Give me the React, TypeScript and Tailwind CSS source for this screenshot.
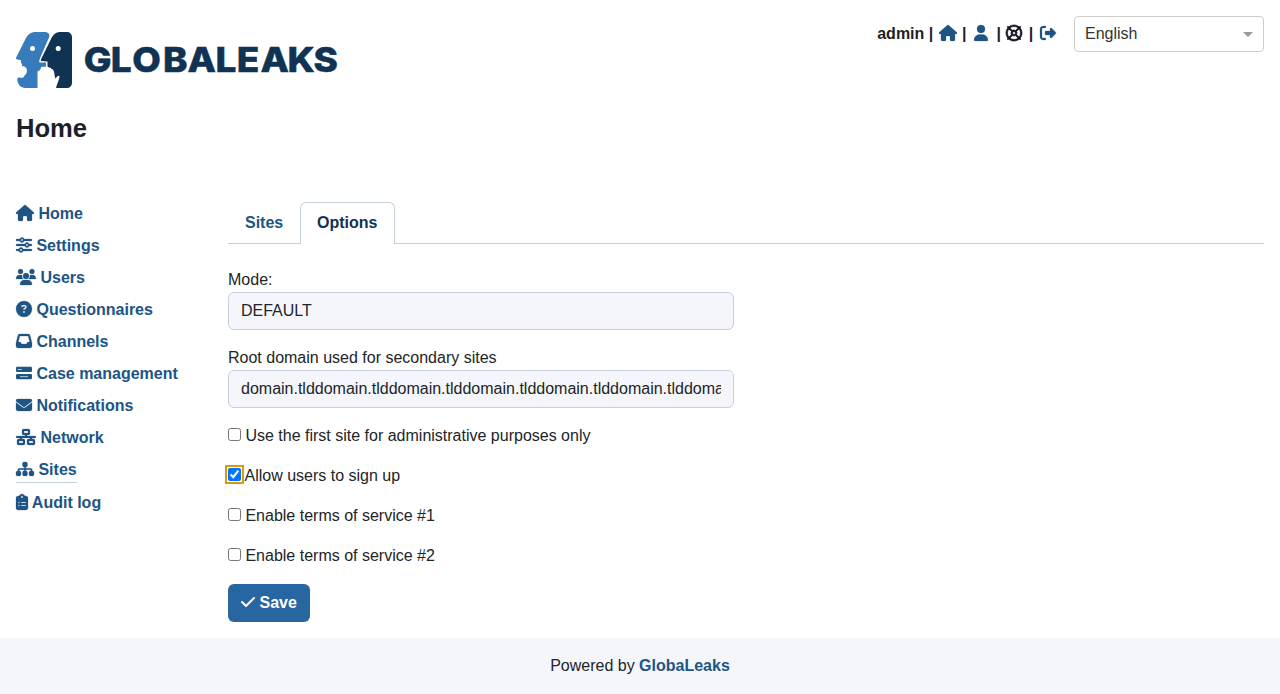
import { useState, type ReactNode } from "react";
import {
  FaCheck,
  FaCircleQuestion,
  FaClipboardList,
  FaEnvelope,
  FaHouse,
  FaInbox,
  FaNetworkWired,
  FaRegLifeRing,
  FaRightFromBracket,
  FaSitemap,
  FaSliders,
  FaUser,
  FaUsers,
} from "react-icons/fa6";

type NavItem = {
  label: string;
  icon: (props: { className?: string }) => ReactNode;
  width: string;
  active?: boolean;
};

function BarsIcon({ className }: { className?: string }) {
  return (
    <svg viewBox="0 0 16 16" fill="currentColor" className={`${className} stroke-0`}>
      <rect x="0" y="1.800" width="16" height="5.200" rx="1.300" />
      <rect x="0" y="9" width="16" height="5.200" rx="1.300" />
      <rect x="1.600" y="4" width="4.200" height="0.900" fill="#c5d3e0" />
      <rect x="4" y="11.200" width="8" height="0.900" fill="#c5d3e0" />
    </svg>
  );
}

const navItems: NavItem[] = [
  { label: "Home", icon: FaHouse, width: "w-[18px]" },
  { label: "Settings", icon: FaSliders, width: "w-[16px]" },
  { label: "Users", icon: FaUsers, width: "w-[20px]" },
  { label: "Questionnaires", icon: FaCircleQuestion, width: "w-[16px]" },
  { label: "Channels", icon: FaInbox, width: "w-[16px]" },
  { label: "Case management", icon: BarsIcon, width: "w-[16px]" },
  { label: "Notifications", icon: FaEnvelope, width: "w-[16px]" },
  { label: "Network", icon: FaNetworkWired, width: "w-[20px]" },
  { label: "Sites", icon: FaSitemap, width: "w-[18px]", active: true },
  { label: "Audit log", icon: FaClipboardList, width: "mr-[-0.6px] w-[12px]" },
];

function Logo() {
  return (
    <svg width="320" height="56" viewBox="0 0 320 56" className="block overflow-visible">
      <path
        fill="#377bbc"
        d="M9 8C11.5 2.5 14.500 0 20 0H28.500C32.500 0 34.300 2.600 33 5.500L24.300 25.500C23.400 27.800 23 29.500 23.500 30.500H30V34.700H25.500L24 38L21.500 39.500V56H9.500C4.500 56 1.300 52 1.300 47L2.500 45.200C6 46.500 8 45.800 8.500 43.500C10.700 42 11.300 39.500 10.700 36.700C9.500 34.500 8 34.200 6 34L6.200 32L5 31V28.300L0.500 27.300C-0.200 26.800 0 26 0.300 25.300Z"
      />
      <path
        fill="#103253"
        d="M34.500 8C37 2.500 39.500 0 45 0H50.500C54 0 56 2 56 5.500V50.500C56 54 54 56 50.500 56H40C41 52 42.800 48.500 43.500 45C43.500 43.500 42.500 43.300 41.500 44.300L39.200 46.500C38.300 43 38.800 40.500 37 37.500L35.500 37L34.500 35.700L33 35.500L31.500 34.500V29.500L25.300 29C24.700 28.500 24.900 27.500 25.300 26.700Z"
      />
      <circle cx="16.500" cy="16.400" r="2.500" fill="#fff" />
      <circle cx="42.200" cy="16.400" r="2.500" fill="#fff" />
      <text
        transform="scale(1.080 1)"
        x="62.700 87.800 107.600 136.100 158.800 184.800 204.300 226.300 251.500 275.400"
        y="40"
        fill="#103253"
        stroke="#103253"
        strokeWidth="0.500"
        className="font-['Inter',sans-serif] text-[34.2px] font-extrabold"
      >
        GLOBALEAKS
      </text>
    </svg>
  );
}

function CheckRow({ children, checked = false }: { children: ReactNode; checked?: boolean }) {
  const [on, setOn] = useState(checked);
  return (
    <label className="flex h-6 items-start">
      <input
        type="checkbox"
        checked={on}
        onChange={() => setOn(!on)}
        className={
          checked
            ? "mt-[4px] mr-[3.5px] size-[13px] rounded-[2.5px] outline-2 outline-offset-1 outline-[#e59700]"
            : "mt-[4px] mr-[4.45px] size-[13px]"
        }
      />
      {children}
    </label>
  );
}

function Field({ label, value }: { label: string; value: string }) {
  return (
    <label className="flex flex-col">
      {label}
      <input
        type="text"
        defaultValue={value}
        className="h-[38px] w-[506px] rounded-md border border-[#c6cfe0] bg-[#f5f6fb] px-3"
      />
    </label>
  );
}

export default function App() {
  return (
    <div className="flex h-[694px] flex-col bg-white font-['Liberation_Sans',Arial,sans-serif] text-base text-[#212529]">
      <header className="flex h-[88px] items-start justify-between px-4 pt-4">
        <div className="pt-4">
          <Logo />
        </div>
        <div className="flex items-start">
          <div className="flex h-9 items-center gap-[5.4px] font-bold text-[#1d1f2a]">
            <span className="mr-[-0.9px]">admin</span>
            <span>|</span>
            <FaHouse className="-mt-[2px] h-4 w-[18px] overflow-visible stroke-[8px] text-[#205485]" />
            <span>|</span>
            <FaUser className="-mt-[2px] ml-[2px] mr-[3px] h-4 w-[14px] overflow-visible stroke-[8px] text-[#205485]" />
            <span>|</span>
            <FaRegLifeRing className="-mt-[2px] ml-[0.2px] mr-[1px] h-4 w-4 overflow-visible stroke-[22px] text-[#111320]" />
            <span>|</span>
            <FaRightFromBracket className="-mt-[2px] ml-[1.300px] h-4 w-4 overflow-visible stroke-[8px] text-[#205485]" />
          </div>
          <div className="ml-[18px] flex h-9 w-[190px] items-center justify-between rounded border border-[#ccc] pr-[10px] pl-[10px] text-[#333]">
            English
            <span className="mt-[1px] border-x-[5px] border-t-[5px] border-x-transparent border-t-[#999]" />
          </div>
        </div>
      </header>

      <h1 className="mt-6 px-4 text-[25.600px] leading-8 font-bold text-[#1d1f2a]">Home</h1>

      <div className="flex flex-1 px-4 pt-[58px]">
        <nav className="flex w-[212px] flex-col items-start font-bold text-[#205485]">
          {navItems.map(({ label, icon: Icon, width, active }) => (
            <a
              key={label}
              className={
                active
                  ? "mb-2 flex h-[25px] items-start gap-[4.450px] border-b border-[#c6cfe0]"
                  : "mb-2 flex h-6 items-start gap-[4.450px]"
              }
            >
              <Icon className={`mt-[3px] h-4 overflow-visible stroke-[8px] ${width}`} />
              <span>{label}</span>
            </a>
          ))}
        </nav>

        <main className="flex-1">
          <div className="flex h-[42px] border-b border-[#c6cfe0] font-bold">
            <a className="w-[72px] pt-[9px] pl-[17px] text-[#205485]">Sites</a>
            <a className="h-[42px] w-[95px] rounded-t-md border border-b-0 border-[#c6cfe0] bg-white pt-2 pl-4 text-[#103253]">
              Options
            </a>
          </div>
          <div className="flex flex-col gap-4 pt-6">
            <Field label="Mode:" value="DEFAULT" />
            <Field
              label="Root domain used for secondary sites"
              value="domain.tlddomain.tlddomain.tlddomain.tlddomain.tlddomain.tlddomain.tld"
            />
            <CheckRow>Use the first site for administrative purposes only</CheckRow>
            <CheckRow checked>Allow users to sign up</CheckRow>
            <CheckRow>Enable terms of service #1</CheckRow>
            <CheckRow>Enable terms of service #2</CheckRow>
            <button className="flex h-[38px] w-[82px] items-center justify-center gap-[4.450px] rounded-md bg-[#2866a2] font-bold text-white">
              <FaCheck className="-mt-[2px] h-4 w-[14px]" />
              Save
            </button>
          </div>
        </main>
      </div>

      <footer className="flex h-14 items-center justify-center bg-[#f5f6fb] whitespace-pre">
        Powered by <a className="font-bold text-[#205485]">GlobaLeaks</a>
      </footer>
    </div>
  );
}
